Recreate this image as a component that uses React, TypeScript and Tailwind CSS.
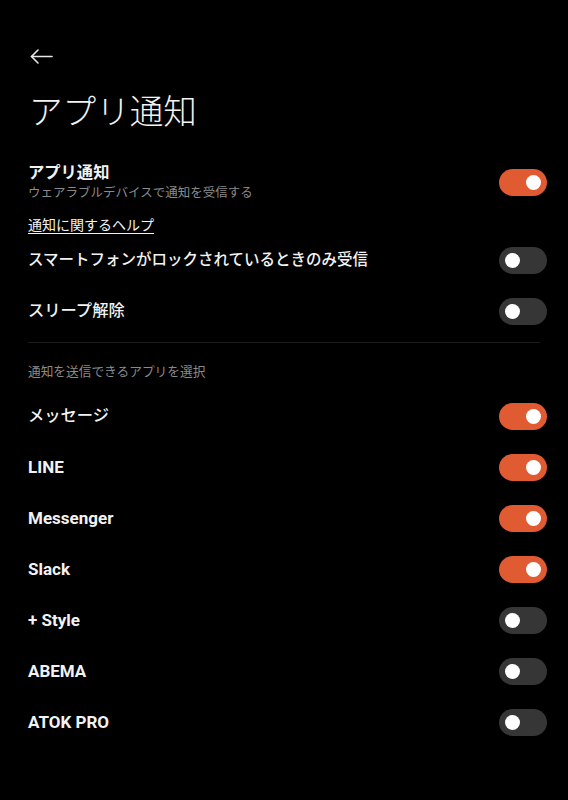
import React from "react";

const FONT = { fontFamily: 'Roboto, "Noto Sans CJK JP", sans-serif' };

function Toggle({ on }: { on: boolean }) {
  return (
    <div
      className={`flex h-[27px] w-[48px] shrink-0 items-center rounded-full px-[6px] ${
        on ? "justify-end bg-[#e05a32]" : "justify-start bg-[#363636]"
      }`}
    >
      <div className="h-[15px] w-[15px] rounded-full bg-white" />
    </div>
  );
}

function Row({ label, on, latin, small }: { label: string; on: boolean; latin?: boolean; small?: boolean }) {
  return (
    <div className="flex h-[51px] items-center justify-between">
      <span
        className={`text-[#f2f2f2] ${
          latin ? "text-[17px] font-bold" : small ? "text-[15.5px] font-medium" : "text-[16.3px] font-medium"
        }`}
      >
        {label}
      </span>
      <Toggle on={on} />
    </div>
  );
}

export default function App() {
  const apps: { label: string; on: boolean; latin?: boolean }[] = [
    { label: "メッセージ", on: true },
    { label: "LINE", on: true, latin: true },
    { label: "Messenger", on: true, latin: true },
    { label: "Slack", on: true, latin: true },
    { label: "+ Style", on: false, latin: true },
    { label: "ABEMA", on: false, latin: true },
    { label: "ATOK PRO", on: false, latin: true },
  ];
  return (
    <div className="h-[800px] w-full overflow-hidden bg-black" style={FONT}>
      <div className="pl-[30px] pt-[49px]">
        <svg width="23" height="15" viewBox="0 0 23 15" fill="none" stroke="#e8e8e8" strokeWidth="1.6" strokeLinecap="round" strokeLinejoin="round">
          <path d="M22 7.5H1.5" />
          <path d="M8 1L1.5 7.5L8 14" />
        </svg>
      </div>
      <div className="mt-[29px] pl-[29px] text-[33.6px] font-light leading-[40px] text-[#f2f2f2]">
        アプリ通知
      </div>
      <div className="pl-[28px] pr-[21px]">
        <div className="mt-[29px] flex items-center justify-between">
          <div className="flex flex-col">
            <span className="text-[16.3px] font-bold leading-[22px] text-[#f2f2f2]">アプリ通知</span>
            <span className="text-[12.5px] leading-[18px] text-[#8a8a8a]">
              ウェアラブルデバイスで通知を受信する
            </span>
          </div>
          <Toggle on={true} />
        </div>
        <div className="mt-[13px] text-[14px] leading-[20px] text-[#f2f2f2] underline underline-offset-[3px]">
          通知に関するヘルプ
        </div>
        <Row label="スマートフォンがロックされているときのみ受信" on={false} small />
        <Row label="スリープ解除" on={false} />
        <div className="mr-[7px] mt-[5px] h-px bg-[#1c1c1c]" />
        <div className="mt-[20px] text-[12.7px] leading-[18px] text-[#8a8a8a]">
          通知を送信できるアプリを選択
        </div>
        <div className="mt-[10px]">
          {apps.map((a) => (
            <Row key={a.label} label={a.label} on={a.on} latin={a.latin} />
          ))}
        </div>
      </div>
    </div>
  );
}
